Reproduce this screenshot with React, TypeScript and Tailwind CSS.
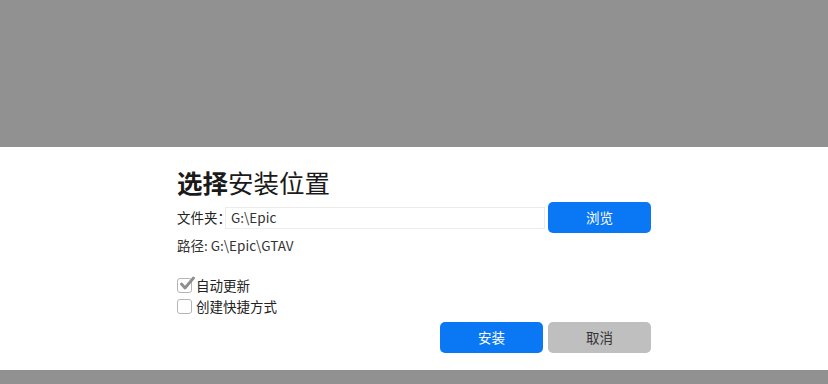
export default function App() {
  return (
    <div
      className="w-[828px] h-[384px] flex flex-col bg-[#919191]"
      style={{ fontFamily: '"Noto Sans CJK SC", "Noto Sans", sans-serif' }}
    >
      <div className="h-[147px] shrink-0" />
      <div className="h-[223px] shrink-0 bg-white flex justify-center">
        <div className="w-[474px] flex flex-col">
          <h1 className="mt-[18px] h-[33px] text-[25.5px] leading-[33px] text-[#1a1a1a]">
            <span className="font-bold">选择</span>安装位置
          </h1>
          <div className="mt-[4px] flex items-center h-[31px]">
            <span className="text-[13.5px] text-[#222]">文件夹：</span>
            <div className="ml-[-6px] w-[320px] h-[22px] border border-[#ececec] flex items-center px-[5px] text-[13.5px] text-[#333]">
              G:\Epic
            </div>
            <button className="ml-auto w-[103px] h-[31px] rounded-[5px] bg-[#0a78f4] text-white text-[13.5px]">
              浏览
            </button>
          </div>
          <div className="mt-[3px] h-[18px] leading-[18px] text-[13.5px] text-[#333]">路径: G:\Epic\GTAV</div>
          <div className="mt-[21px] flex items-center h-[20px] gap-[4px]">
            <span className="relative w-[15px] h-[15px] rounded-[3px] border border-[#b5b5b5]">
              <svg viewBox="0 0 16 16" className="absolute left-[1px] top-[-4px] w-[16px] h-[16px]">
                <path d="M2.5 9 L6 13 L14.5 3" fill="none" stroke="#8e8e8e" strokeWidth="2.8" strokeLinecap="round" strokeLinejoin="round" />
              </svg>
            </span>
            <span className="text-[13.5px] text-[#222]">自动更新</span>
          </div>
          <div className="mt-[1px] flex items-center h-[20px] gap-[4px]">
            <span className="w-[15px] h-[15px] rounded-[3px] border border-[#b5b5b5]" />
            <span className="text-[13.5px] text-[#222]">创建快捷方式</span>
          </div>
          <div className="mt-[6px] flex justify-end gap-[5px]">
            <button className="w-[103px] h-[31px] rounded-[5px] bg-[#0a78f4] text-white text-[13.5px]">安装</button>
            <button className="w-[103px] h-[31px] rounded-[5px] bg-[#bfbfbf] text-[#333] text-[13.5px]">取消</button>
          </div>
        </div>
      </div>
      <div className="flex-1" />
    </div>
  );
}
